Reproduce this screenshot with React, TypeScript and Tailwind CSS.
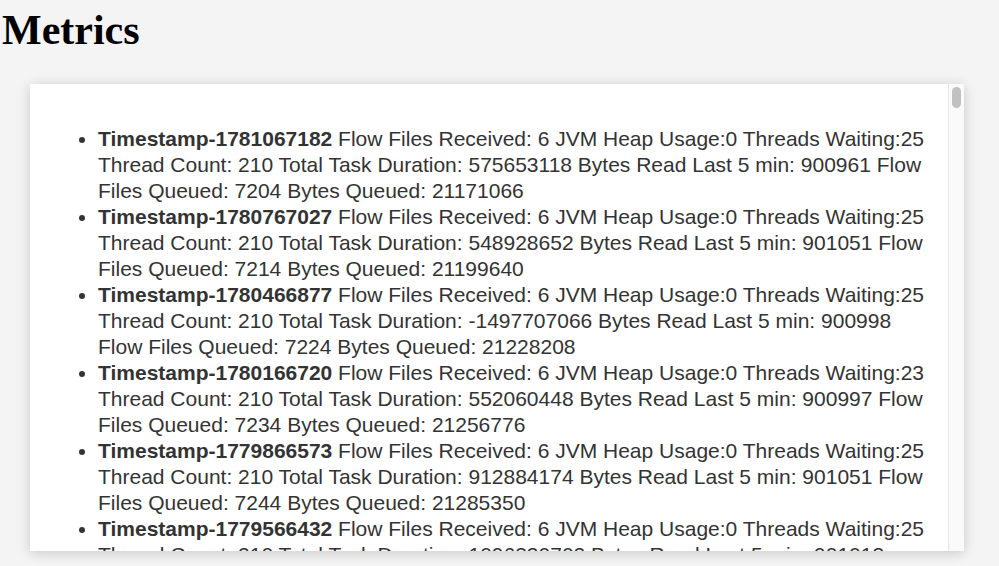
const seed = [
  { ts: 1781067182, waiting: 25, duration: 575653118, read: 900961, queued: 7204, bytes: 21171066 },
  { ts: 1780767027, waiting: 25, duration: 548928652, read: 901051, queued: 7214, bytes: 21199640 },
  { ts: 1780466877, waiting: 25, duration: -1497707066, read: 900998, queued: 7224, bytes: 21228208 },
  { ts: 1780166720, waiting: 23, duration: 552060448, read: 900997, queued: 7234, bytes: 21256776 },
  { ts: 1779866573, waiting: 25, duration: 912884174, read: 901051, queued: 7244, bytes: 21285350 },
  { ts: 1779566432, waiting: 25, duration: 1096330702, read: 901013, queued: 7254, bytes: 21313918 },
]

const metrics = Array.from({ length: 12 }, (_, i) => {
  if (i < seed.length) return seed[i]
  return {
    ts: 1779566432 - (i - 5) * 300147,
    waiting: i % 7 === 3 ? 23 : 25,
    duration: 540000000 + ((i * 7919371) % 420000000),
    read: 900950 + ((i * 37) % 110),
    queued: 7204 + i * 10,
    bytes: 21171066 + i * 28570,
  }
})

function MetricItem({ m }: { m: (typeof metrics)[number] }) {
  return <li>
    <b>Timestamp-{m.ts}</b> Flow Files Received: 6 JVM Heap Usage:0 Threads Waiting:{m.waiting} Thread Count: 210 Total Task Duration: {m.duration} Bytes Read Last 5 min: {m.read} Flow Files Queued: {m.queued} Bytes Queued: {m.bytes}
  </li>
}

export default function App() {
  return <div className="min-h-[566px] bg-[#f4f4f4] pt-[6px] pb-[15px]">
    <h1 className="text-[42px] leading-[48px] font-bold text-black pl-[2px]" style={{ fontFamily: '"Liberation Serif", "Times New Roman", serif' }}>Metrics</h1>
    <div className="ml-[30px] mt-[30px] w-[934px] h-[467px] bg-white shadow-[0_2px_12px_rgba(0,0,0,0.18)] flex">
      <div className="flex-1 overflow-hidden pl-[28px] pr-[14px] pt-[42px]">
        <ul className="list-disc pl-[40px] text-[21px] leading-[26px] text-[#333]" style={{ fontFamily: '"Liberation Sans", Arial, sans-serif' }}>
          {metrics.map(m => <MetricItem key={m.ts} m={m} />)}
        </ul>
      </div>
      <div className="w-[16px] shrink-0 bg-[#fafafa] border-l border-[#e6e6e6] pt-[3px]">
        <div className="mx-auto w-[9px] h-[21px] rounded-full bg-[#c1c1c1]" />
      </div>
    </div>
  </div>
}
